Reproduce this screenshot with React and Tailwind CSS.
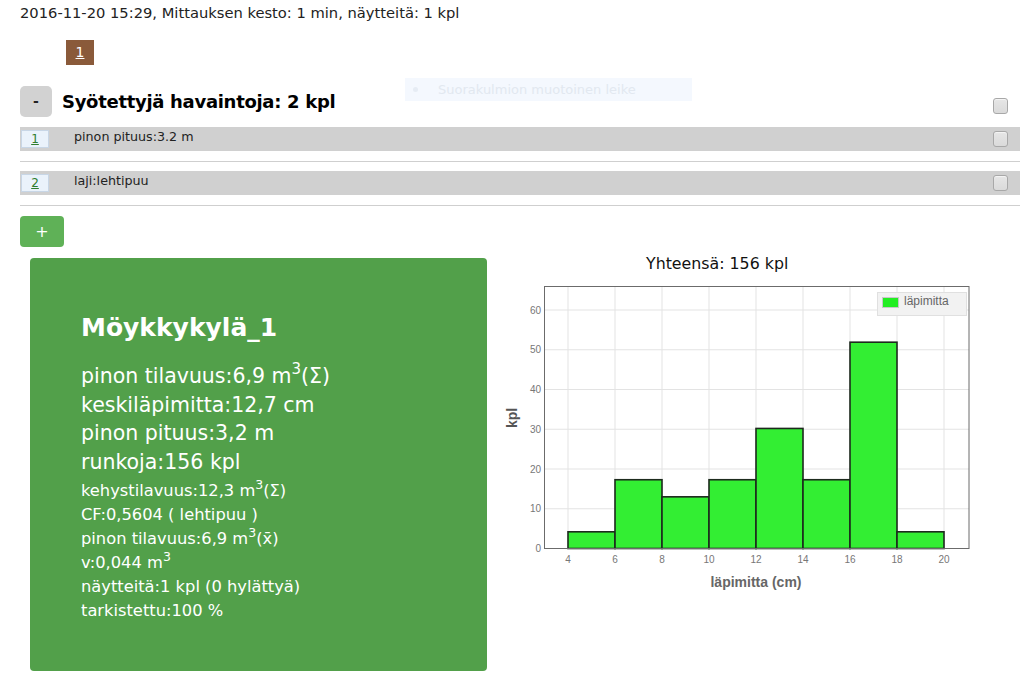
import React from "react";

const X = (v) => 68 + (v - 4) * 23.5;
const Y = (v) => 269.5 - v * 3.975;

const bars = [
  [4, 6, 4.2],
  [6, 8, 17.3],
  [8, 10, 13],
  [10, 12, 17.3],
  [12, 14, 30.2],
  [14, 16, 17.3],
  [16, 18, 51.9],
  [18, 20, 4.2],
];

function Chart() {
  const xs = [4, 6, 8, 10, 12, 14, 16, 18, 20];
  const ys = [0, 10, 20, 30, 40, 50, 60];
  return (
    <svg width="480" height="320" viewBox="0 0 480 320" className="block">
      <rect x="44.5" y="7.5" width="424.5" height="262" fill="#fff" />
      {xs.map((v) => (
        <line key={"gx" + v} x1={X(v)} x2={X(v)} y1="7.5" y2="269.5" stroke="#e3e3e3" strokeWidth="1" />
      ))}
      {ys.map((v) => (
        <line key={"gy" + v} x1="44.5" x2="469" y1={Y(v)} y2={Y(v)} stroke="#e3e3e3" strokeWidth="1" />
      ))}
      {bars.map(([a, b, v]) => (
        <rect
          key={a}
          x={X(a)}
          y={Y(v)}
          width={X(b) - X(a)}
          height={269.5 - Y(v)}
          fill="#33ee33"
          stroke="#1d2a1d"
          strokeWidth="1.6"
        />
      ))}
      <rect x="44.5" y="7.5" width="424.5" height="262" fill="none" stroke="#6b6b6b" strokeWidth="1" />
      {ys.map((v) => (
        <text key={"ly" + v} x="41" y={Y(v) + 3.5} textAnchor="end" fontSize="10" fill="#777" fontFamily="'Liberation Sans', Arial, sans-serif">
          {v}
        </text>
      ))}
      {xs.map((v) => (
        <text key={"lx" + v} x={X(v)} y="284" textAnchor="middle" fontSize="10" fill="#777" fontFamily="'Liberation Sans', Arial, sans-serif">
          {v}
        </text>
      ))}
      <text
        x="0"
        y="0"
        transform="translate(17 139) rotate(-90)"
        textAnchor="middle"
        fontSize="14"
        fontWeight="bold"
        fill="#555"
        fontFamily="'Liberation Sans', Arial, sans-serif"
      >
        kpl
      </text>
      <text x="256" y="308" textAnchor="middle" fontSize="14" fontWeight="bold" fill="#666" fontFamily="'Liberation Sans', Arial, sans-serif">
        läpimitta (cm)
      </text>
      <rect x="377.5" y="13.5" width="89" height="23" fill="#f2f2f2" stroke="#e0e0e0" />
      <rect x="382.5" y="18.5" width="16" height="10" fill="#22ee22" stroke="#c8c8c8" />
      <text x="404" y="26" fontSize="12" fill="#666" fontFamily="'Liberation Sans', Arial, sans-serif">
        läpimitta
      </text>
    </svg>
  );
}

function Checkbox() {
  return (
    <div className="w-[15px] h-[16px] rounded-[3px] border border-[#a8a8a8] bg-gradient-to-b from-[#e6e6e6] to-[#dadada] shadow-[inset_0_1px_1px_rgba(255,255,255,0.6)]" />
  );
}

function Row({ n, text }) {
  return (
    <div className="pb-[10px] border-b border-[#cfcfcf]">
      <div className="h-[24px] bg-[#d0d0d0] flex items-center">
        <div className="ml-[1px] w-[28px] h-[18px] bg-[#eaf2fb] border border-[#c8d6e6] flex items-center justify-center text-[12px] text-[#2e7d2e] underline leading-none">
          {n}
        </div>
        <div className="ml-[25px] text-[12.7px] text-[#222] leading-none -mt-[4px]">{text}</div>
        <div className="ml-auto mr-[12px]">
          <Checkbox />
        </div>
      </div>
    </div>
  );
}

function Sup({ big }) {
  return (
    <span className={"relative align-baseline leading-none " + (big ? "text-[15px] -top-[9px]" : "text-[12.5px] -top-[7px]")}>3</span>
  );
}

export default function App() {
  const font = "font-['DejaVu_Sans','Verdana',sans-serif]";
  return (
    <div className={"relative w-[1024px] h-[684px] bg-white overflow-hidden text-[#111] " + font}>
      <div className="pl-5 pt-[4px] text-[14.7px] leading-[18px] text-[#222]">
        2016-11-20 15:29, Mittauksen kesto: 1 min, näytteitä: 1 kpl
      </div>
      <div className="mt-[18px] ml-[66px] w-[28px] h-[25px] bg-[#8a5a3a] text-white text-[14px] underline flex items-center justify-center">
        1
      </div>

      <div className="pl-5 pr-[4px]">
        <div className="mt-[21px] h-[31px] flex items-center">
          <div className="w-[32px] h-[31px] rounded-[5px] bg-[#d2d2d2] flex items-center justify-center text-[14px] font-bold text-[#222]">
            -
          </div>
          <div className="ml-[10px] text-[18px] font-bold text-black tracking-[-0.3px]">Syötettyjä havaintoja: 2 kpl</div>
          <div className="ml-auto mr-[12px] mt-[8px]">
            <Checkbox />
          </div>
        </div>

        <div className="mt-[10px]">
          <Row n="1" text="pinon pituus:3.2 m" />
          <div className="mt-[9px]">
            <Row n="2" text="laji:lehtipuu" />
          </div>
        </div>

        <div className="mt-[10px] w-[44px] h-[31px] rounded-[4px] bg-[#5fb157] text-white text-[16px] flex items-center justify-center">
          +
        </div>
      </div>

      <div className="mt-[11px] flex">
        <div className="ml-[30px] w-[457px] h-[413px] rounded-[4px] bg-[#52a04a] text-white pl-[51px] pt-[54px]">
          <div className="text-[25px] font-bold leading-[32px]">Möykkykylä_1</div>
          <div className="mt-[18px] text-[20.5px] leading-[28.5px]">
            <div>
              pinon tilavuus:6,9 m<Sup big />(Σ)
            </div>
            <div>keskiläpimitta:12,7 cm</div>
            <div>pinon pituus:3,2 m</div>
            <div>runkoja:156 kpl</div>
          </div>
          <div className="mt-[3px] text-[16.3px] leading-[24px]">
            <div>
              kehystilavuus:12,3 m<Sup />(Σ)
            </div>
            <div>CF:0,5604 ( lehtipuu )</div>
            <div>
              pinon tilavuus:6,9 m<Sup />(x̄)
            </div>
            <div>
              v:0,044 m<Sup />
            </div>
            <div>näytteitä:1 kpl (0 hylättyä)</div>
            <div>tarkistettu:100 %</div>
          </div>
        </div>

        <div className="ml-[13px] w-[480px] flex flex-col">
          <div className="pl-[146px] text-[15.8px] leading-[20px] text-[#111] -mt-[4px]">Yhteensä: 156 kpl</div>
          <div className="mt-[5px]">
            <Chart />
          </div>
        </div>
      </div>

      <div className="absolute left-[405px] top-[78px] w-[287px] h-[23px] bg-[#f4f8fe] flex items-center text-[13px] text-[#e2e8f0]">
        <span className="ml-[8px] w-[5px] h-[5px] rounded-full bg-[#e6ecf4]" />
        <span className="ml-[20px]">Suorakulmion muotoinen leike</span>
      </div>
    </div>
  );
}
